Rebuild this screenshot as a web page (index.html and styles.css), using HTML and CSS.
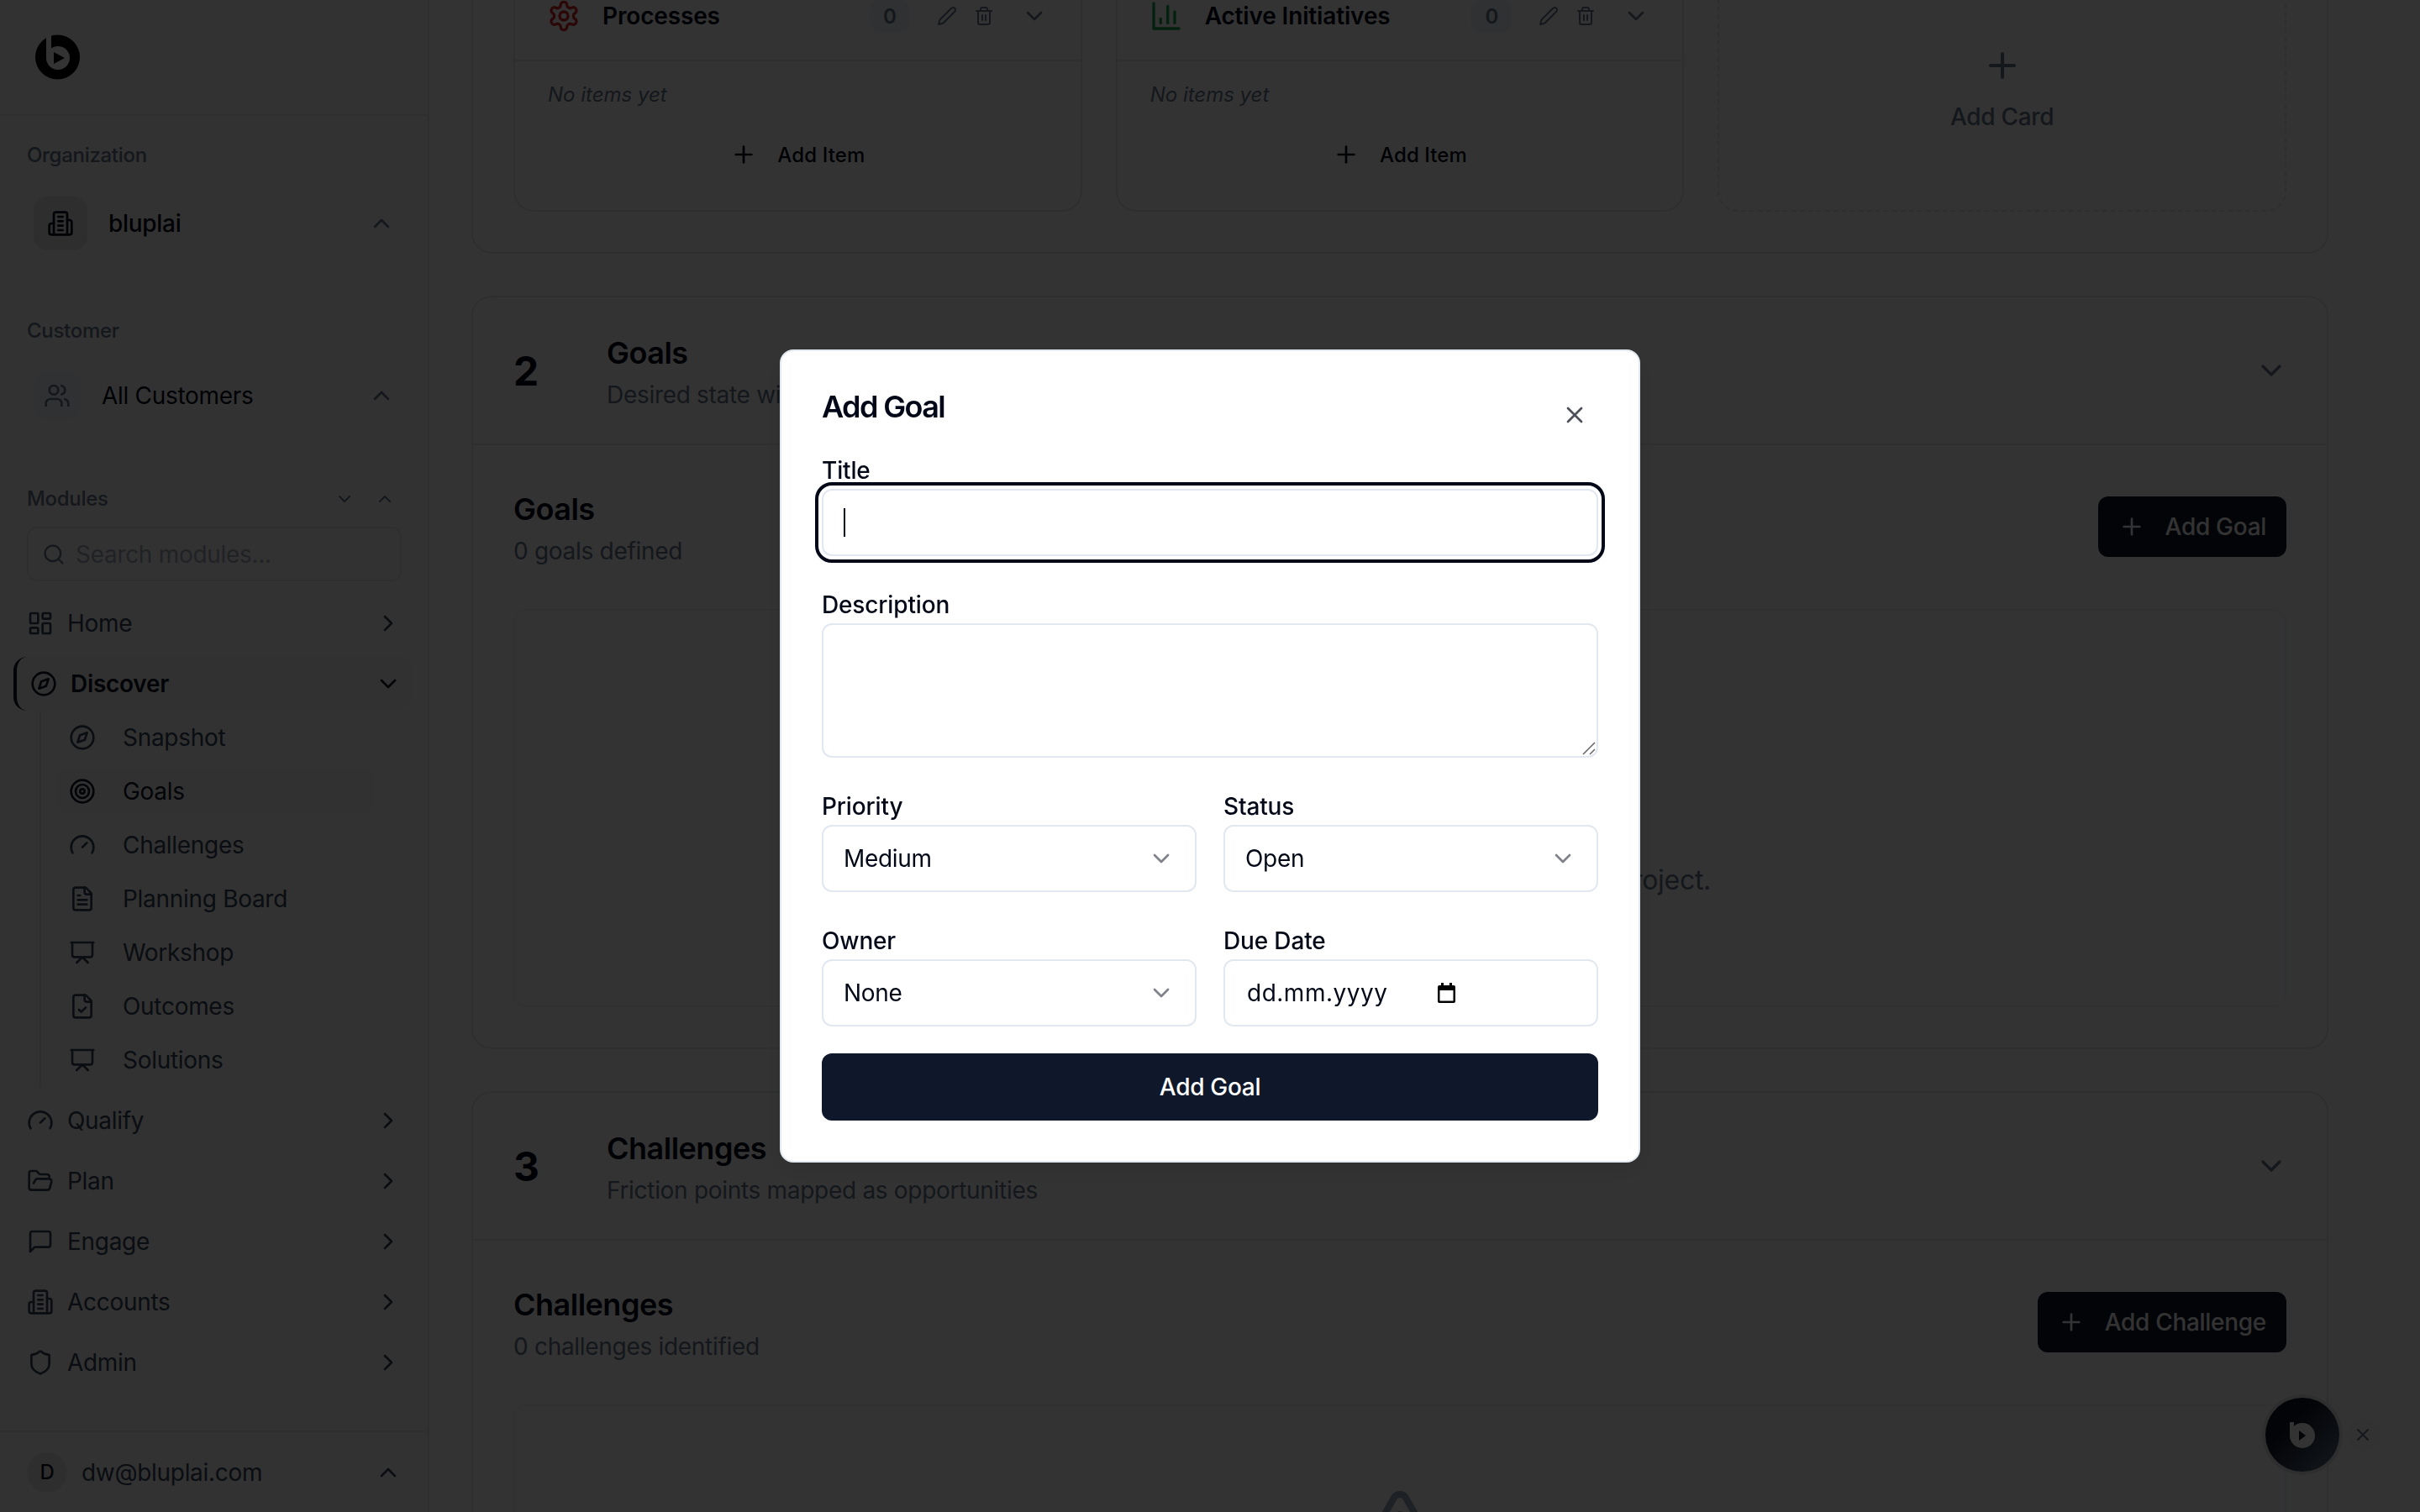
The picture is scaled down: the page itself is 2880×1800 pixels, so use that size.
FILE: index.html
```html
<!DOCTYPE html>
<html lang="en">
<head>
    <meta charset="UTF-8">
    <title>Discover - Goals</title>
    <link rel="stylesheet" href="styles.css">
</head>
<body>

<svg class="sprite" xmlns="http://www.w3.org/2000/svg">
    <symbol id="i-chevron-up" viewBox="0 0 24 24"><path d="m18 15-6-6-6 6"/></symbol>
    <symbol id="i-chevron-down" viewBox="0 0 24 24"><path d="m6 9 6 6 6-6"/></symbol>
    <symbol id="i-chevron-right" viewBox="0 0 24 24"><path d="m9 18 6-6-6-6"/></symbol>
    <symbol id="i-plus" viewBox="0 0 24 24"><path d="M5 12h14"/><path d="M12 5v14"/></symbol>
    <symbol id="i-x" viewBox="0 0 24 24"><path d="M18 6 6 18"/><path d="m6 6 12 12"/></symbol>
    <symbol id="i-building" viewBox="0 0 24 24"><path d="M6 22V4a2 2 0 0 1 2-2h8a2 2 0 0 1 2 2v18Z"/><path d="M6 12H4a2 2 0 0 0-2 2v6a2 2 0 0 0 2 2h2"/><path d="M18 9h2a2 2 0 0 1 2 2v9a2 2 0 0 1-2 2h-2"/><path d="M10 6h4"/><path d="M10 10h4"/><path d="M10 14h4"/><path d="M10 18h4"/></symbol>
    <symbol id="i-users" viewBox="0 0 24 24"><path d="M16 21v-2a4 4 0 0 0-4-4H6a4 4 0 0 0-4 4v2"/><circle cx="9" cy="7" r="4"/><path d="M22 21v-2a4 4 0 0 0-3-3.87"/><path d="M16 3.13a4 4 0 0 1 0 7.75"/></symbol>
    <symbol id="i-search" viewBox="0 0 24 24"><circle cx="11" cy="11" r="8"/><path d="m21 21-4.3-4.3"/></symbol>
    <symbol id="i-dashboard" viewBox="0 0 24 24"><rect width="7" height="9" x="3" y="3" rx="1"/><rect width="7" height="5" x="14" y="3" rx="1"/><rect width="7" height="9" x="14" y="12" rx="1"/><rect width="7" height="5" x="3" y="16" rx="1"/></symbol>
    <symbol id="i-compass" viewBox="0 0 24 24"><circle cx="12" cy="12" r="10"/><polygon points="16.24 7.76 14.12 14.12 7.76 16.24 9.88 9.88 16.24 7.76"/></symbol>
    <symbol id="i-target" viewBox="0 0 24 24"><circle cx="12" cy="12" r="10"/><circle cx="12" cy="12" r="6"/><circle cx="12" cy="12" r="2"/></symbol>
    <symbol id="i-gauge" viewBox="0 0 24 24"><path d="m12 14 4-4"/><path d="M3.34 19a10 10 0 1 1 17.32 0"/></symbol>
    <symbol id="i-file-text" viewBox="0 0 24 24"><path d="M15 2H6a2 2 0 0 0-2 2v16a2 2 0 0 0 2 2h12a2 2 0 0 0 2-2V7Z"/><path d="M14 2v4a2 2 0 0 0 2 2h4"/><path d="M10 9H8"/><path d="M16 13H8"/><path d="M16 17H8"/></symbol>
    <symbol id="i-file-check" viewBox="0 0 24 24"><path d="M15 2H6a2 2 0 0 0-2 2v16a2 2 0 0 0 2 2h12a2 2 0 0 0 2-2V7Z"/><path d="M14 2v4a2 2 0 0 0 2 2h4"/><path d="m9 15 2 2 4-4"/></symbol>
    <symbol id="i-presentation" viewBox="0 0 24 24"><path d="M2 3h20"/><path d="M21 3v11a2 2 0 0 1-2 2H5a2 2 0 0 1-2-2V3"/><path d="m7 21 5-5 5 5"/></symbol>
    <symbol id="i-folder" viewBox="0 0 24 24"><path d="m6 14 1.5-2.9A2 2 0 0 1 9.24 10H20a2 2 0 0 1 1.94 2.5l-1.54 6a2 2 0 0 1-1.95 1.5H4a2 2 0 0 1-2-2V5a2 2 0 0 1 2-2h3.9a2 2 0 0 1 1.69.9l.81 1.2a2 2 0 0 0 1.67.9H18a2 2 0 0 1 2 2v2"/></symbol>
    <symbol id="i-message" viewBox="0 0 24 24"><path d="M21 15a2 2 0 0 1-2 2H7l-4 4V5a2 2 0 0 1 2-2h14a2 2 0 0 1 2 2z"/></symbol>
    <symbol id="i-shield" viewBox="0 0 24 24"><path d="M20 13c0 5-3.5 7.5-7.66 8.95a1 1 0 0 1-.67-.01C7.5 20.5 4 18 4 13V6a1 1 0 0 1 1-1c2 0 4.5-1.2 6.24-2.72a1.17 1.17 0 0 1 1.52 0C14.51 3.81 17 5 19 5a1 1 0 0 1 1 1z"/></symbol>
    <symbol id="i-settings" viewBox="0 0 24 24"><path d="M12.22 2h-.44a2 2 0 0 0-2 2v.18a2 2 0 0 1-1 1.73l-.43.25a2 2 0 0 1-2 0l-.15-.08a2 2 0 0 0-2.73.73l-.22.38a2 2 0 0 0 .73 2.73l.15.1a2 2 0 0 1 1 1.72v.51a2 2 0 0 1-1 1.74l-.15.09a2 2 0 0 0-.73 2.73l.22.38a2 2 0 0 0 2.73.73l.15-.08a2 2 0 0 1 2 0l.43.25a2 2 0 0 1 1 1.73V20a2 2 0 0 0 2 2h.44a2 2 0 0 0 2-2v-.18a2 2 0 0 1 1-1.73l.43-.25a2 2 0 0 1 2 0l.15.08a2 2 0 0 0 2.73-.73l.22-.39a2 2 0 0 0-.73-2.73l-.15-.08a2 2 0 0 1-1-1.74v-.5a2 2 0 0 1 1-1.74l.15-.09a2 2 0 0 0 .73-2.73l-.22-.38a2 2 0 0 0-2.73-.73l-.15.08a2 2 0 0 1-2 0l-.43-.25a2 2 0 0 1-1-1.73V4a2 2 0 0 0-2-2z"/><circle cx="12" cy="12" r="3"/></symbol>
    <symbol id="i-chart" viewBox="0 0 24 24"><path d="M3 3v18h18"/><path d="M18 17V9"/><path d="M13 17V5"/><path d="M8 17v-3"/></symbol>
    <symbol id="i-pencil" viewBox="0 0 24 24"><path d="M17 3a2.85 2.83 0 1 1 4 4L7.5 20.5 2 22l1.5-5.5Z"/></symbol>
    <symbol id="i-trash" viewBox="0 0 24 24"><path d="M3 6h18"/><path d="M19 6v14c0 1-1 2-2 2H7c-1 0-2-1-2-2V6"/><path d="M8 6V4c0-1 1-2 2-2h4c1 0 2 1 2 2v2"/><path d="M10 11v6"/><path d="M14 11v6"/></symbol>
    <symbol id="i-alert" viewBox="0 0 24 24"><path d="m21.73 18-8-14a2 2 0 0 0-3.48 0l-8 14A2 2 0 0 0 4 21h16a2 2 0 0 0 1.73-3"/><path d="M12 9v4"/><path d="M12 17h.01"/></symbol>
</svg>

<div class="app">
    <aside class="sidebar">
        <div class="brand">
            <svg class="logo" viewBox="0 0 53 54">
                <circle cx="26.5" cy="27" r="26.5" fill="#000"/>
                <rect x="13" y="0" width="6" height="28" fill="#fff"/>
                <circle cx="27" cy="28" r="14" fill="#fff"/>
                <polygon points="22,21 35,28 22,35" fill="#000"/>
            </svg>
        </div>

        <div class="side-label">Organization</div>
        <div class="switcher org">
            <span class="switcher-icon"><svg class="icon"><use href="#i-building"/></svg></span>
            <span class="switcher-name">bluplai</span>
            <svg class="icon muted"><use href="#i-chevron-up"/></svg>
        </div>

        <div class="side-label customer-label">Customer</div>
        <div class="switcher customer">
            <span class="switcher-icon"><svg class="icon muted"><use href="#i-users"/></svg></span>
            <span class="switcher-name">All Customers</span>
            <svg class="icon muted"><use href="#i-chevron-up"/></svg>
        </div>

        <div class="side-label modules-label">
            <span>Modules</span>
            <svg class="icon-sm muted"><use href="#i-chevron-down"/></svg>
            <svg class="icon-sm muted"><use href="#i-chevron-up"/></svg>
        </div>
        <div class="side-search">
            <svg class="icon-search"><use href="#i-search"/></svg>
            <span>Search modules...</span>
        </div>

        <nav class="nav">
            <a class="nav-item"><svg class="icon"><use href="#i-dashboard"/></svg><span>Home</span><svg class="icon"><use href="#i-chevron-right"/></svg></a>
            <a class="nav-item active"><svg class="icon"><use href="#i-compass"/></svg><span>Discover</span><svg class="icon"><use href="#i-chevron-down"/></svg></a>
            <div class="subnav">
                <a class="sub-item"><svg class="icon"><use href="#i-compass"/></svg>Snapshot</a>
                <a class="sub-item current"><svg class="icon"><use href="#i-target"/></svg>Goals</a>
                <a class="sub-item"><svg class="icon"><use href="#i-gauge"/></svg>Challenges</a>
                <a class="sub-item"><svg class="icon"><use href="#i-file-text"/></svg>Planning Board</a>
                <a class="sub-item"><svg class="icon"><use href="#i-presentation"/></svg>Workshop</a>
                <a class="sub-item"><svg class="icon"><use href="#i-file-check"/></svg>Outcomes</a>
                <a class="sub-item"><svg class="icon"><use href="#i-presentation"/></svg>Solutions</a>
            </div>
            <a class="nav-item"><svg class="icon"><use href="#i-gauge"/></svg><span>Qualify</span><svg class="icon"><use href="#i-chevron-right"/></svg></a>
            <a class="nav-item"><svg class="icon"><use href="#i-folder"/></svg><span>Plan</span><svg class="icon"><use href="#i-chevron-right"/></svg></a>
            <a class="nav-item"><svg class="icon"><use href="#i-message"/></svg><span>Engage</span><svg class="icon"><use href="#i-chevron-right"/></svg></a>
            <a class="nav-item"><svg class="icon"><use href="#i-building"/></svg><span>Accounts</span><svg class="icon"><use href="#i-chevron-right"/></svg></a>
            <a class="nav-item"><svg class="icon"><use href="#i-shield"/></svg><span>Admin</span><svg class="icon"><use href="#i-chevron-right"/></svg></a>
        </nav>

        <div class="user">
            <span class="avatar">D</span>
            <span class="user-mail">dw@bluplai.com</span>
            <svg class="icon"><use href="#i-chevron-up"/></svg>
        </div>
    </aside>

    <main class="main">
        <section class="panel first">
            <div class="cards">
                <div class="card">
                    <div class="card-head">
                        <svg class="card-icon red"><use href="#i-settings"/></svg>
                        <span class="card-title">Processes</span>
                        <span class="badge">0</span>
                        <span class="card-tools">
                            <svg class="icon-sm muted"><use href="#i-pencil"/></svg>
                            <svg class="icon-sm muted"><use href="#i-trash"/></svg>
                        </span>
                        <svg class="icon muted"><use href="#i-chevron-down"/></svg>
                    </div>
                    <div class="card-body">
                        <p class="no-items">No items yet</p>
                        <div class="add-item"><svg class="icon"><use href="#i-plus"/></svg>Add Item</div>
                    </div>
                </div>
                <div class="card">
                    <div class="card-head">
                        <svg class="card-icon green"><use href="#i-chart"/></svg>
                        <span class="card-title">Active Initiatives</span>
                        <span class="badge">0</span>
                        <span class="card-tools">
                            <svg class="icon-sm muted"><use href="#i-pencil"/></svg>
                            <svg class="icon-sm muted"><use href="#i-trash"/></svg>
                        </span>
                        <svg class="icon muted"><use href="#i-chevron-down"/></svg>
                    </div>
                    <div class="card-body">
                        <p class="no-items">No items yet</p>
                        <div class="add-item"><svg class="icon"><use href="#i-plus"/></svg>Add Item</div>
                    </div>
                </div>
                <div class="card add-card">
                    <svg class="icon-lg muted"><use href="#i-plus"/></svg>
                    <span>Add Card</span>
                </div>
            </div>
        </section>

        <section class="panel">
            <header class="panel-head">
                <span class="panel-num">2</span>
                <div class="panel-titles">
                    <h2>Goals</h2>
                    <p>Desired state with</p>
                </div>
                <svg class="icon-toggle muted"><use href="#i-chevron-down"/></svg>
            </header>
            <div class="panel-body">
                <div class="list-head">
                    <div>
                        <h3>Goals</h3>
                        <p>0 goals defined</p>
                    </div>
                    <button class="btn-dark"><svg class="icon"><use href="#i-plus"/></svg>Add Goal</button>
                </div>
                <div class="empty goals-empty">
                    <p>for this project.</p>
                </div>
            </div>
        </section>

        <section class="panel">
            <header class="panel-head">
                <span class="panel-num">3</span>
                <div class="panel-titles">
                    <h2>Challenges</h2>
                    <p>Friction points mapped as opportunities</p>
                </div>
                <svg class="icon-toggle muted"><use href="#i-chevron-down"/></svg>
            </header>
            <div class="panel-body">
                <div class="list-head">
                    <div>
                        <h3>Challenges</h3>
                        <p>0 challenges identified</p>
                    </div>
                    <button class="btn-dark"><svg class="icon"><use href="#i-plus"/></svg>Add Challenge</button>
                </div>
                <div class="empty">
                    <svg class="icon-empty"><use href="#i-alert"/></svg>
                </div>
            </div>
        </section>
    </main>
</div>

<button class="chat-fab">
    <svg class="chat-logo" viewBox="0 0 30 31">
        <rect x="0" y="0" width="5" height="16" fill="#fff"/>
        <circle cx="15" cy="16" r="15" fill="#fff"/>
        <polygon points="11,10 19,16 11,22" fill="#0f172a"/>
    </svg>
</button>
<button class="chat-close"><svg class="icon-sm muted"><use href="#i-x"/></svg></button>

<div class="overlay"></div>

<div class="modal">
    <h1 class="modal-title">Add Goal</h1>
    <button class="modal-close"><svg class="icon"><use href="#i-x"/></svg></button>
    <form class="form">
        <div class="field">
            <label>Title</label>
            <div class="control focused"><span class="caret"></span></div>
        </div>
        <div class="field">
            <label>Description</label>
            <div class="textarea-wrap">
                <textarea class="textarea"></textarea>
                <svg class="grip" viewBox="0 0 16 16"><path d="M15 1 1 15M15 9l-6 6"/></svg>
            </div>
        </div>
        <div class="row">
            <div class="field">
                <label>Priority</label>
                <div class="control"><span>Medium</span><svg class="icon faded"><use href="#i-chevron-down"/></svg></div>
            </div>
            <div class="field">
                <label>Status</label>
                <div class="control"><span>Open</span><svg class="icon faded"><use href="#i-chevron-down"/></svg></div>
            </div>
        </div>
        <div class="row">
            <div class="field">
                <label>Owner</label>
                <div class="control"><span>None</span><svg class="icon faded"><use href="#i-chevron-down"/></svg></div>
            </div>
            <div class="field">
                <label>Due Date</label>
                <div class="control date">
                    <span>dd.mm.yyyy</span>
                    <svg class="calendar" viewBox="0 0 21 24">
                        <path d="M4 0h3v3h7V0h3v3h2a2 2 0 0 1 2 2v17a2 2 0 0 1-2 2H2a2 2 0 0 1-2-2V5a2 2 0 0 1 2-2h2ZM2.500 9v12.500h16V9Z" fill="#000" fill-rule="evenodd"/>
                    </svg>
                </div>
            </div>
        </div>
        <button class="btn-submit" type="button">Add Goal</button>
    </form>
</div>

</body>
</html>
```

FILE: styles.css
```css
* {
    box-sizing: border-box;
}
html, body {
    margin: 0;
    height: 100%;
    overflow: hidden;
}
body {
    font-family: Inter, "Liberation Sans", sans-serif;
    font-size: 28px;
    letter-spacing: -0.3px;
    color: #020817;
    background: #fff;
}
h1, h2, h3, p {
    margin: 0;
}
button {
    font: inherit;
    letter-spacing: inherit;
    border: none;
    background: none;
    padding: 0;
    color: inherit;
}
.sprite {
    display: none;
}

/* icons */
.icon, .icon-sm, .icon-lg, .icon-search, .icon-empty, .icon-toggle, .card-icon {
    fill: none;
    stroke: currentColor;
    stroke-width: 2;
    stroke-linecap: round;
    stroke-linejoin: round;
    flex-shrink: 0;
}
.icon {
    width: 32px;
    height: 32px;
}
.icon-sm {
    width: 24px;
    height: 24px;
}
.icon-lg {
    width: 48px;
    height: 48px;
}
.icon-search {
    width: 28px;
    height: 28px;
}
.icon-toggle {
    width: 40px;
    height: 40px;
}
.muted {
    color: #64748b;
}

.app {
    display: flex;
    height: 1800px;
}

/* sidebar */
.sidebar {
    width: 511px;
    flex-shrink: 0;
    height: 1800px;
    background: #fafafa;
    border-right: 2px solid #e5e7eb;
    display: flex;
    flex-direction: column;
}
.brand {
    height: 138px;
    flex-shrink: 0;
    padding: 41px 0 0 42px;
    border-bottom: 2px solid #e5e7eb;
}
.logo {
    display: block;
    width: 53px;
    height: 54px;
}
.side-label {
    height: 32px;
    line-height: 32px;
    margin-top: 31px;
    padding-left: 32px;
    font-size: 24px;
    font-weight: 500;
    color: #64748b;
}
.customer-label {
    margin-top: 80px;
}
.modules-label {
    margin-top: 79px;
    padding-right: 39px;
    display: flex;
    align-items: center;
    gap: 24px;
}
.modules-label span {
    flex: 1;
}
.switcher {
    display: flex;
    align-items: center;
    margin-top: 33px;
    padding: 0 39px 0 40px;
    gap: 25px;
}
.switcher-name {
    flex: 1;
}
.switcher-icon {
    display: flex;
    align-items: center;
    justify-content: center;
    border-radius: 16px;
}
.org .switcher-icon {
    width: 64px;
    height: 64px;
    background: #e5e7eb;
}
.org .switcher-name {
    font-weight: 500;
}
.customer .switcher-icon {
    width: 56px;
    height: 56px;
    background: #f1f5f9;
}
.side-search {
    display: flex;
    align-items: center;
    gap: 12px;
    height: 65px;
    margin: 17px 31px 0 32px;
    padding-left: 16px;
    border: 2px solid #e5e7eb;
    border-radius: 12px;
    color: #a3aab8;
}
.side-search .icon-search {
    color: #64748b;
}
.nav {
    margin-top: 18px;
    display: flex;
    flex-direction: column;
    gap: 8px;
}
.nav-item {
    display: flex;
    align-items: center;
    gap: 16px;
    height: 64px;
    padding: 0 31px 0 32px;
    color: #334155;
}
.nav-item span {
    flex: 1;
}
.nav-item.active {
    margin-left: 16px;
    margin-right: 19px;
    padding: 0 12px 0 16px;
    border-left: 4px solid #0f172a;
    border-radius: 16px;
    background: #f5f5f5;
    color: #0f172a;
    font-weight: 600;
}
.subnav {
    margin: -8px 0 0 47px;
    padding: 5px 0 5px 19px;
    border-left: 2px solid #e5e7eb;
    display: flex;
    flex-direction: column;
    gap: 10px;
}
.sub-item {
    display: flex;
    align-items: center;
    gap: 32px;
    width: 377px;
    height: 54px;
    padding-left: 14px;
    border-radius: 12px;
    color: #334155;
}
.sub-item.current {
    background: #f5f5f5;
    color: #0f172a;
}
.user {
    margin-top: auto;
    height: 97px;
    flex-shrink: 0;
    display: flex;
    align-items: center;
    gap: 17px;
    padding: 0 31px 0 32px;
    border-top: 2px solid #e5e7eb;
    color: #334155;
}
.user-mail {
    flex: 1;
}
.avatar {
    width: 48px;
    height: 48px;
    border-radius: 50%;
    background: #e5e7eb;
    display: flex;
    align-items: center;
    justify-content: center;
    font-size: 24px;
    font-weight: 500;
    color: #0f172a;
}

/* main content */
.main {
    flex: 1;
    height: 1800px;
    overflow: hidden;
    padding: 0 109px 0 50px;
}
.panel {
    border: 2px solid #e5e7eb;
    border-radius: 24px;
    margin-bottom: 50px;
}
.panel.first {
    margin-top: -85px;
    padding: 48px;
}
.cards {
    display: grid;
    grid-template-columns: repeat(3, 1fr);
    gap: 40px;
}
.card {
    height: 287px;
    border: 2px solid #e5e7eb;
    border-radius: 24px;
}
.card-head {
    display: flex;
    align-items: center;
    gap: 32px;
    height: 106px;
    padding: 0 39px 0 38px;
    border-bottom: 2px solid #e5e7eb;
}
.card-icon {
    width: 40px;
    height: 40px;
    margin-right: -6px;
}
.red {
    color: #dc2626;
}
.green {
    color: #16a34a;
}
.card-title {
    flex: 1;
    font-weight: 600;
    letter-spacing: -0.15px;
}
.badge {
    width: 48px;
    height: 38px;
    border-radius: 12px;
    background: #f1f5f9;
    color: #64748b;
    display: flex;
    align-items: center;
    justify-content: center;
    font-size: 24px;
    font-weight: 600;
}
.card-tools {
    display: flex;
    gap: 20px;
}
.card-body {
    padding: 22px 38px 0;
}
.no-items {
    padding-left: 1px;
    line-height: 36px;
    font-size: 24px;
    font-style: italic;
    letter-spacing: 0;
    color: #64748b;
}
.add-item {
    display: flex;
    align-items: center;
    justify-content: center;
    gap: 24px;
    height: 56px;
    margin-top: 25px;
    font-size: 24px;
    font-weight: 500;
    letter-spacing: 0.1px;
}
.add-card {
    display: flex;
    flex-direction: column;
    align-items: center;
    justify-content: center;
    gap: 20px;
    padding-bottom: 8px;
    border-style: dashed;
    color: #64748b;
    font-weight: 500;
}
.panel-head {
    display: flex;
    align-items: center;
    height: 176px;
    padding: 0 46px 0 48px;
    border-bottom: 2px solid #e5e7eb;
}
.panel-num {
    width: 111px;
    font-size: 48px;
    font-weight: 700;
}
.panel-titles {
    flex: 1;
    padding-top: 4px;
}
h2, h3 {
    font-size: 36px;
    line-height: 44px;
    font-weight: 600;
    letter-spacing: -0.5px;
}
.panel-titles p, .list-head p {
    margin-top: 10px;
    line-height: 36px;
    color: #64748b;
}
.panel-body {
    padding: 54px 48px 48px;
}
.list-head {
    display: flex;
    align-items: flex-start;
    justify-content: space-between;
    margin-bottom: 51px;
}
.btn-dark {
    display: flex;
    align-items: center;
    gap: 24px;
    height: 72px;
    margin-top: 7px;
    padding: 0 24px;
    border-radius: 12px;
    background: #0f172a;
    color: #fff;
    font-weight: 500;
}
.empty {
    height: 474px;
    padding-top: 93px;
    border: 2px solid #f1f5f9;
    border-radius: 16px;
    color: #64748b;
}
.icon-empty {
    display: block;
    width: 96px;
    height: 96px;
    margin: 0 auto;
    color: #94a3b8;
}
.goals-empty {
    padding: 301px 683px 0 0;
    text-align: right;
    font-size: 32px;
    line-height: 40px;
}

/* chat button */
.chat-fab {
    position: fixed;
    right: 96px;
    bottom: 48px;
    width: 88px;
    height: 88px;
    border-radius: 50%;
    background: linear-gradient(135deg, #0f172a 35%, #64748b 100%);
    box-shadow: 0 0 0 4px #e5e7eb;
    display: flex;
    align-items: center;
    justify-content: center;
}
.chat-logo {
    width: 30px;
    height: 31px;
}
.chat-close {
    position: fixed;
    right: 48px;
    bottom: 72px;
    width: 40px;
    height: 40px;
    border-radius: 50%;
    background: #f8fafc;
    display: flex;
    align-items: center;
    justify-content: center;
}

/* dialog */
.overlay {
    position: fixed;
    inset: 0;
    background: rgba(0, 0, 0, 0.8);
}
.modal {
    position: fixed;
    left: 928px;
    top: 416px;
    width: 1024px;
    height: 968px;
    padding: 48px;
    background: #fff;
    border: 2px solid #e2e8f0;
    border-radius: 16px;
    box-shadow: 0 10px 30px rgba(0, 0, 0, 0.1);
}
.modal-title {
    font-size: 36px;
    line-height: 36px;
    font-weight: 600;
    letter-spacing: -1.6px;
}
.modal-close {
    position: absolute;
    right: 60px;
    top: 60px;
    width: 32px;
    height: 32px;
    opacity: 0.7;
    display: flex;
}
.form {
    margin-top: 44px;
    display: flex;
    flex-direction: column;
    gap: 44px;
}
.field {
    display: flex;
    flex-direction: column;
    gap: 8px;
}
.field label {
    font-weight: 500;
    line-height: 28px;
    letter-spacing: -0.15px;
}
.row {
    display: grid;
    grid-template-columns: 1fr 1fr;
    gap: 32px;
}
.control {
    display: flex;
    align-items: center;
    justify-content: space-between;
    height: 80px;
    padding: 0 24px;
    border: 2px solid #e2e8f0;
    border-radius: 12px;
    background: #fff;
}
.control.focused {
    justify-content: flex-start;
    outline: 4px solid #020817;
    outline-offset: 4px;
}
.caret {
    width: 2px;
    height: 34px;
    background: #020817;
}
.faded {
    opacity: 0.5;
}
.control.date {
    justify-content: flex-start;
    padding-left: 26px;
    letter-spacing: 0.5px;
}
.calendar {
    width: 21px;
    height: 24px;
    margin-left: 60px;
}
.textarea-wrap {
    position: relative;
}
.textarea {
    display: block;
    width: 100%;
    height: 160px;
    padding: 16px 24px;
    border: 2px solid #e2e8f0;
    border-radius: 12px;
    background: #fff;
    font: inherit;
    outline: none;
    resize: none;
}
.grip {
    position: absolute;
    right: 3px;
    bottom: 3px;
    width: 16px;
    height: 16px;
    fill: none;
    stroke: #666;
    stroke-width: 1.5;
}
.btn-submit {
    height: 80px;
    margin-top: -12px;
    border-radius: 12px;
    background: #0f172a;
    color: #fff;
    font-weight: 500;
}
```
